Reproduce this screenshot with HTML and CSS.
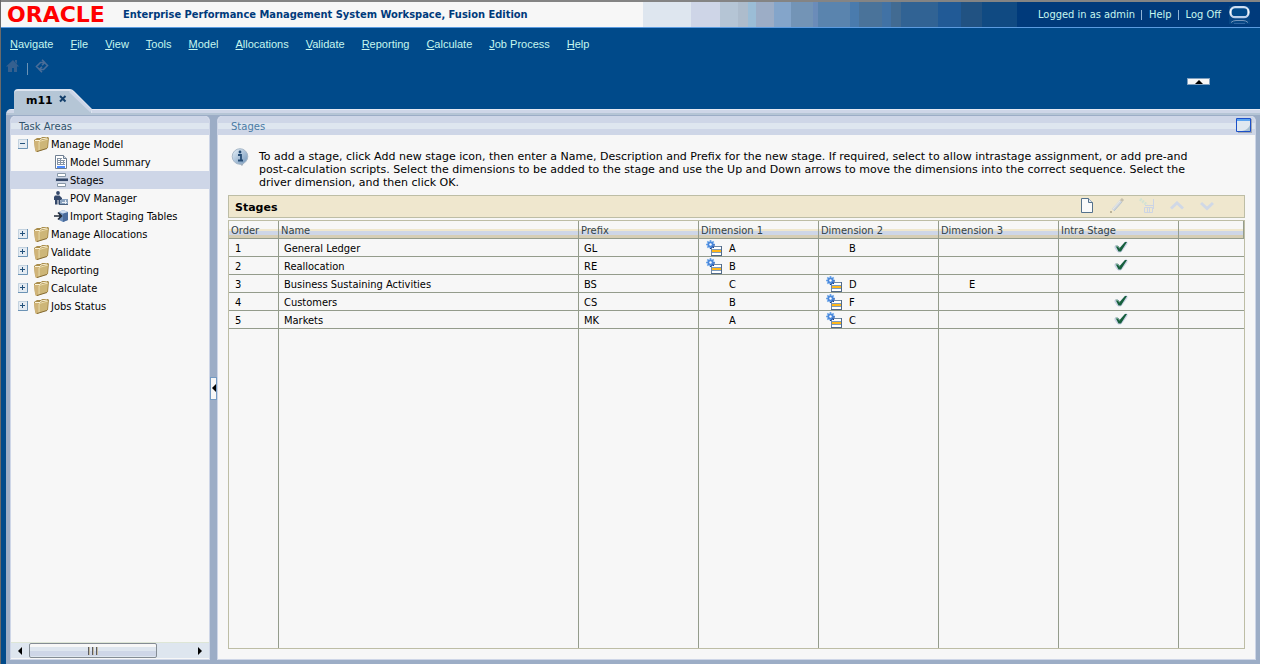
FILE: index.html
```html
<!DOCTYPE html>
<html lang="en">
<head>
<meta charset="utf-8">
<title>Enterprise Performance Management System Workspace, Fusion Edition</title>
<link rel="stylesheet" href="styles.css">
</head>
<body>
<svg class="sprite" aria-hidden="true">
  <defs>
    <linearGradient id="g-blue" x1="0" y1="0" x2="1" y2="1"><stop offset="0" stop-color="#e8f2fa"/><stop offset="1" stop-color="#6f93b8"/></linearGradient>
    <linearGradient id="g-ring" x1="0" y1="0" x2="0" y2="1"><stop offset="0" stop-color="#c9dcf2"/><stop offset=".5" stop-color="#fff"/><stop offset="1" stop-color="#b4cbe8"/></linearGradient>
    <symbol id="folder" viewBox="0 0 15 15">
      <path d="M0 3 3 1h4l1-1h6l1 1-1 10-9 3-3 1-1-3z" fill="#a98d4c"/>
      <path d="M0 4h5l-1 10-2 1-1-3z" fill="#d0b478"/>
      <path d="M5 4.500 14 2l-1 9-9 3.500z" fill="#cdb678"/>
      <path d="M5 4.500 14 2M5 5v9" stroke="#eedfb2" fill="none"/>
      <path d="M1 3.500h5L7 2l6-1" stroke="#fbf3d8" fill="none"/>
      <path d="M3 14.500 13 11.500" stroke="#866c33" fill="none"/>
    </symbol>
    <symbol id="plus" viewBox="0 0 10 10">
      <path d="M0 0h10v10H0z" fill="#e4ebf2"/><path d="M9.500 0v9.500H0" stroke="#6c93b5" fill="none"/><path d="M.5 9V.5H9" stroke="#c3d2df" fill="none"/>
      <path d="M2 4.500h5M4.500 2v5" stroke="#24527c" fill="none"/>
    </symbol>
    <symbol id="minus" viewBox="0 0 10 10">
      <path d="M0 0h10v10H0z" fill="#e4ebf2"/><path d="M9.500 0v9.500H0" stroke="#6c93b5" fill="none"/><path d="M.5 9V.5H9" stroke="#c3d2df" fill="none"/>
      <path d="M2 4.500h5" stroke="#24527c" fill="none"/>
    </symbol>
    <symbol id="sheet" viewBox="0 0 14 14">
      <path d="M1.500.5h8l3 3v10h-11z" fill="#fff" stroke="#6f7f92"/><path d="M9.500.5v3h3" fill="#d5dde6" stroke="#6f7f92"/>
      <path d="M3 3.500h5M3 5.500h8M3 7.500h8M3 9.500h8M3.500 3v7M6.500 3v7M9.500 5v5" stroke="#8795a6" fill="none"/><path d="M3 11h8v2H3z" fill="#4d8bff"/>
    </symbol>
    <symbol id="stages" viewBox="0 0 14 14">
      <path d="M3.500.5h8v3h-8zM3.500 10.500h8v3h-8z" fill="#fff" stroke="#8898a8"/>
      <path d="M1 5h13v4H1z" fill="#c4cedd"/><path d="M2 5.500h12v2.500H2z" fill="#34486a"/>
    </symbol>
    <symbol id="pov" viewBox="0 0 14 14">
      <circle cx="4" cy="2" r="1.900" fill="#34486a"/><path d="M0 6l1-1.500h4.500L8 7v2H6v4.500H4.500V9H3.500v4.500H1V9H0z" fill="#34486a"/>
      <path d="M6 9.500 8 8h6v5H6z" fill="#8ba3bf"/><path d="M8 11.500h5M11.500 9v4" stroke="#e8eef5" fill="none"/><path d="M5 13.500h9" stroke="#49617f"/>
    </symbol>
    <symbol id="import" viewBox="0 0 14 14">
      <path d="M5 3 9 1l5 2v8l-5 2-4-2z" fill="#6d8fbc"/><path d="M9 4.500 14 3v8l-5 2z" fill="#4a6c9d"/><path d="M5 3 9 1l5 2-5 1.500z" fill="#cfdef0"/>
      <path d="M0 7h7M4 3.500 7.500 7 4 10.500" stroke="#222b3a" stroke-width="1.600" fill="none"/>
    </symbol>
    <symbol id="dim" viewBox="0 0 16 16">
      <path d="M5.500 6.500h10v9h-10z" fill="#fff" stroke="#6f88a4"/><path d="M6 9h9v4H6z" fill="#7d9dc0"/><path d="M6 10h9v2H6z" fill="#ffb71a"/><path d="M15.500 6v10M5 15.500h11" stroke="#526a88" fill="none"/>
      <path d="M4.500 0v9M0 4.500h9M1.300 1.300l6.400 6.400M7.700 1.300 1.300 7.700" stroke="#6aa6ea" stroke-width="1.700"/>
      <circle cx="4.500" cy="4.500" r="3.100" fill="#4a88dc"/><path d="M4 8.500h1l3-3v-1M7 8l1-1" stroke="#163f92" fill="none"/><circle cx="4.500" cy="4.500" r="1.200" fill="#fff"/>
    </symbol>
    <symbol id="check" viewBox="0 0 14 12">
      <path d="M1 5h3l2 2 5-6h2v2L7 11H4L1 7z" fill="#cbd3e6" stroke="#cbd3e6"/><path d="M1.500 4.800h2.300l1.900 2.200L11 1h2L7 10.500H4.500z" fill="#17603d"/><path d="M2 5.500h2L5.500 7.500" stroke="#6fa48b" fill="none"/>
    </symbol>
  </defs>
</svg>

<div class="workspace">
  <header class="masthead">
    <span class="logo">ORACLE</span>
    <h1 class="product">Enterprise Performance Management System Workspace, Fusion Edition</h1>
    <div class="stripes"></div>
    <div class="session">
      <span>Logged in as admin</span><a href="#help">Help</a><a href="#logoff">Log Off</a>
      <svg class="ring" viewBox="0 0 21 18"><path d="M0 0h21v18H0z" fill="#064684"/><rect x="1.500" y="1.200" width="18" height="10" rx="4.500" fill="#004a8a" stroke="url(#g-ring)" stroke-width="2.200"/><path d="M2 16.500q2-2 5-2h7q3 0 5 2" stroke="#7294ba" fill="none"/><path d="M5 17.500h11" stroke="#2e64a0"/></svg>
    </div>
  </header>

  <nav class="menu">
    <a href="#navigate"><u>N</u>avigate</a><a href="#file"><u>F</u>ile</a><a href="#view"><u>V</u>iew</a><a href="#tools"><u>T</u>ools</a><a href="#model"><u>M</u>odel</a><a href="#allocations"><u>A</u>llocations</a><a href="#validate"><u>V</u>alidate</a><a href="#reporting"><u>R</u>eporting</a><a href="#calculate"><u>C</u>alculate</a><a href="#job"><u>J</u>ob Process</a><a href="#menuhelp"><u>H</u>elp</a>
  </nav>

  <div class="quickbar">
    <button class="quick" aria-label="Home"><svg width="14" height="14" viewBox="0 0 14 14"><path d="M7 1 13 7.500h-2V13H8V9H6v4H2V7.500H0z" fill="#35608f"/><path d="M9 1h2v4L9 3z" fill="#35608f"/></svg></button>
    <span class="rule"></span>
    <button class="quick" aria-label="Refresh"><svg width="14" height="14" viewBox="0 0 14 14"><path d="M4 10 1.500 7.500 5.500 3.500h4M7 .8 9.700 3.500 7 6.200M10 4l2.500 2.500-4 4h-4M7 7.800 4.300 10.500 7 13.200" stroke="#4a6d98" stroke-width="1.600" fill="none"/></svg></button>
    <button class="collapse" aria-label="Collapse header"><svg width="8" height="4" viewBox="0 0 8 4"><path d="M4 0 8 4H0z"/></svg></button>
  </div>

  <div class="tabs">
    <div class="tab">
      <svg class="tab-shape" viewBox="0 0 78 24"><path d="M0 24V4Q0 0 4 0h52q2 0 4 2l18 18v4z" fill="#dde4ef"/><path d="M0 24V5Q0 2 3 2h52l3 1 19 19v2z" fill="#b5c6d6"/><path d="M56 2l21 20" stroke="#ccd5e7" stroke-width="3"/></svg>
      <span class="tab-name">m11</span>
      <button class="tab-close" aria-label="Close tab"><svg width="8" height="8" viewBox="0 0 8 8"><path d="M1 1 6.500 6.500M6.500 1 1 6.500" stroke="#14406c" stroke-width="2"/></svg></button>
    </div>
  </div>

  <div class="frame">
    <aside class="panel side">
      <h2 class="panel-head side-head">Task Areas</h2>
      <ul class="tree">
        <li><svg class="toggle"><use href="#minus"/></svg><svg class="folder"><use href="#folder"/></svg><a href="#m">Manage Model</a></li>
        <li class="child"><svg><use href="#sheet"/></svg><a href="#ms">Model Summary</a></li>
        <li class="child selected"><svg><use href="#stages"/></svg><a href="#st">Stages</a></li>
        <li class="child"><svg><use href="#pov"/></svg><a href="#pm">POV Manager</a></li>
        <li class="child"><svg><use href="#import"/></svg><a href="#is">Import Staging Tables</a></li>
        <li><svg class="toggle"><use href="#plus"/></svg><svg class="folder"><use href="#folder"/></svg><a href="#ma">Manage Allocations</a></li>
        <li><svg class="toggle"><use href="#plus"/></svg><svg class="folder"><use href="#folder"/></svg><a href="#va">Validate</a></li>
        <li><svg class="toggle"><use href="#plus"/></svg><svg class="folder"><use href="#folder"/></svg><a href="#re">Reporting</a></li>
        <li><svg class="toggle"><use href="#plus"/></svg><svg class="folder"><use href="#folder"/></svg><a href="#ca">Calculate</a></li>
        <li><svg class="toggle"><use href="#plus"/></svg><svg class="folder"><use href="#folder"/></svg><a href="#js">Jobs Status</a></li>
      </ul>
      <div class="scroll">
        <button class="arrow" aria-label="Scroll left"><svg width="4" height="8" viewBox="0 0 4 8"><path d="M4 0v8L0 4z"/></svg></button>
        <div class="track"><div class="thumb"><i></i><i></i><i></i></div></div>
        <button class="arrow" aria-label="Scroll right"><svg width="4" height="8" viewBox="0 0 4 8"><path d="M0 0v8l4-4z"/></svg></button>
      </div>
    </aside>

    <div class="splitter"><button aria-label="Collapse task areas"><svg width="4" height="8" viewBox="0 0 4 8"><path d="M4 0v8L0 4z"/></svg></button></div>

    <main class="panel content">
      <div class="panel-head content-head"><h2>Stages</h2>
        <button class="maximize" aria-label="Maximize"><svg width="16" height="15" viewBox="0 0 16 15"><path d="M1 1h15v14H2z" fill="#a2a8b4"/><path d="M.5.5h14v13H.5z" fill="#dfe8f0" stroke="#1c50c8"/><path d="M1 1h13v2H1z" fill="#5ba4f0"/><path d="M14 7v6H6q6-1 8-6z" fill="#a8c0d2"/></svg></button>
      </div>
      <div class="body">
        <div class="hint">
          <svg width="18" height="18" viewBox="0 0 18 18"><path d="M8 15h5l-2 3z" fill="#93a3b3"/><circle cx="9" cy="8.500" r="7.800" fill="url(#g-blue)" stroke="#a8b8c8"/><path d="M7 7h3v5M7 12.500h5" stroke="#244a72" stroke-width="1.800" fill="none"/><circle cx="9" cy="4" r="1.400" fill="#244a72"/></svg>
          <p>To add a stage, click Add new stage icon, then enter a Name, Description and Prefix for the new stage. If required, select to allow intrastage assignment, or add pre-and<br>post-calculation scripts. Select the dimensions to be added to the stage and use the Up and Down arrows to move the dimensions into the correct sequence. Select the<br>driver dimension, and then click OK.</p>
        </div>
        <div class="toolbar">
          <h3>Stages</h3>
          <button aria-label="Add new stage"><svg width="14" height="15" viewBox="0 0 14 15"><path d="M1.500.5h7l4 4v10h-11z" fill="#fafafa" stroke="#54718c"/><path d="M8.500.5v4h4" fill="#dfe6ec" stroke="#54718c"/></svg></button>
          <button aria-label="Edit" disabled><svg width="16" height="16" viewBox="0 0 16 16"><path d="M4 12 12 3" stroke="#cfd5e0" stroke-width="3"/><path d="M4 11 11 3" stroke="#e8ebe5"/><path d="M12 3l2-2" stroke="#c5bfae" stroke-width="3"/><path d="M1 14h2" stroke="#bdb49a" stroke-width="2"/><path d="M5 13l8-9" stroke="#b9c5cd"/></svg></button>
          <button aria-label="Delete" disabled><svg width="16" height="16" viewBox="0 0 16 16"><path d="M1 1l7 6" stroke="#d3e3d3" stroke-width="3" stroke-dasharray="2 1"/><path d="M5.500 9.500h8v5h-8zM8.500 10v4M10.500 10v4M14.500 1v10M6 7.500h9" stroke="#ccd4e4" fill="none"/></svg></button>
          <button aria-label="Move up" disabled><svg width="14" height="10" viewBox="0 0 14 10"><path d="M1 7.500 7 2l6 5.500" stroke="#d0d8e6" stroke-width="3" fill="none"/></svg></button>
          <button aria-label="Move down" disabled><svg width="14" height="10" viewBox="0 0 14 10"><path d="M1 2l6 5.500L13 2" stroke="#d0d8e6" stroke-width="3" fill="none"/></svg></button>
        </div>
        <div class="grid">
          <table>
            <colgroup><col class="c-order"><col class="c-name"><col class="c-std"><col class="c-std"><col class="c-std"><col class="c-std"><col class="c-std"><col></colgroup>
            <thead><tr><th>Order</th><th>Name</th><th>Prefix</th><th>Dimension 1</th><th>Dimension 2</th><th>Dimension 3</th><th>Intra Stage</th><th></th></tr></thead>
            <tbody>
              <tr><td>1</td><td>General Ledger</td><td>GL</td><td class="dim"><svg><use href="#dim"/></svg>A</td><td class="dim"><svg></svg>B</td><td></td><td class="tick"><svg><use href="#check"/></svg></td><td></td></tr>
              <tr><td>2</td><td>Reallocation</td><td>RE</td><td class="dim"><svg><use href="#dim"/></svg>B</td><td></td><td></td><td class="tick"><svg><use href="#check"/></svg></td><td></td></tr>
              <tr><td>3</td><td>Business Sustaining Activities</td><td>BS</td><td class="dim"><svg></svg>C</td><td class="dim"><svg><use href="#dim"/></svg>D</td><td class="dim"><svg></svg>E</td><td></td><td></td></tr>
              <tr><td>4</td><td>Customers</td><td>CS</td><td class="dim"><svg></svg>B</td><td class="dim"><svg><use href="#dim"/></svg>F</td><td></td><td class="tick"><svg><use href="#check"/></svg></td><td></td></tr>
              <tr><td>5</td><td>Markets</td><td>MK</td><td class="dim"><svg></svg>A</td><td class="dim"><svg><use href="#dim"/></svg>C</td><td></td><td class="tick"><svg><use href="#check"/></svg></td><td></td></tr>
              <tr class="rest"><td></td><td></td><td></td><td></td><td></td><td></td><td></td><td></td></tr>
            </tbody>
          </table>
        </div>
      </div>
    </main>
  </div>
</div>
</body>
</html>
```
FILE: styles.css
```css
* { box-sizing: border-box; }

body {
  margin: 0;
  background: #fff;
  color: #000;
  font: 11px/18px "DejaVu Sans Condensed", "DejaVu Sans", sans-serif;
}

h1, h2, h3, p, ul { margin: 0; padding: 0; font-size: 11px; font-weight: normal; }
a { color: inherit; text-decoration: none; }
button { border: 0; padding: 0; background: none; font: inherit; display: flex; align-items: center; justify-content: center; }
svg { display: block; flex: none; }
.sprite { position: absolute; width: 0; height: 0; }

.workspace {
  display: flex;
  flex-direction: column;
  height: 100vh;
  margin-right: 1px;
  border-left: 1px solid #6a6a6a;
  background: #004a8a;
}

.masthead {
  display: flex;
  align-items: stretch;
  flex: none;
  height: 28px;
  border-top: 2px solid #848484;
  border-bottom: 1px solid #5b9be0;
  background: #f7f7f7;
}
.logo { flex: none; width: 122px; padding-left: 6px; color: #f00; font: bold 22px/25px "DejaVu Sans", sans-serif; }
.product { flex: 1; color: #003a7b; font-weight: bold; line-height: 26px; white-space: nowrap; }
.stripes {
  flex: none;
  width: 374px;
  background: linear-gradient(90deg,
    #dee6ef 0 48px, #ced5e7 0 77px, #b5c5d5 0 95px, #adbccc 0 105px, #9bbdd6 0 113px,
    #9cadc6 0 131px, #84a5ca 0 148px, #7394b6 0 170px, #6b8cb9 0 175px, #5a84ae 0 207px,
    #4a7bad 0 216px, #4a739a 0 239px, #4172a5 0 248px, #426b92 0 258px, #316394 0 295px,
    #215a96 0 318px, #215282 0 339px, #104a82 0);
}
.session {
  display: flex;
  align-items: center;
  justify-content: flex-end;
  flex: none;
  min-width: 243px;
  padding: 1px 10px 0 0;
  background: #003a7b;
  color: #c6f7ef;
}
.session a { margin-left: 6px; padding-left: 7px; border-left: 1px solid #8fb4d8; line-height: 10px; }
.ring { width: 21px; height: 18px; margin-left: 8px; }

.menu {
  display: flex;
  flex: none;
  gap: 17px;
  padding: 6px 9px 5px;
  color: #c6f7ef;
  font: 11px/20px "Liberation Sans", Arial, sans-serif;
}

.quickbar { display: flex; flex: none; height: 30px; padding-left: 5px; }
.quick { width: 14px; height: 14px; }
.rule { width: 1px; height: 12px; margin: 4px 7px 0 7px; background: #6c93b5; }
.collapse { width: 23px; height: 7px; margin: 19px 50px 0 auto; background: #f7f7f7; border: 1px solid #7f9fbe; }

.tabs { display: flex; flex: none; height: 20px; padding-left: 13px; }
.tab { position: relative; display: flex; align-items: flex-start; gap: 6px; width: 78px; height: 24px; padding: 2px 0 0 12px; }
.tab-shape { position: absolute; inset: 0; }
.tab-name { position: relative; font: bold 11px/20px "DejaVu Sans", sans-serif; }
.tab-close { position: relative; height: 16px; }

.frame {
  display: flex;
  flex: 1;
  min-height: 0;
  margin-left: 5px;
  padding: 7px 4px 4px;
  border-radius: 5px 0 0;
  background: linear-gradient(#e4e9f3 0 1px, #ced6e7 0 4px, #b5c5d5 0 6px, #9cadc6 0);
}
.panel {
  display: flex;
  flex-direction: column;
  min-width: 0;
  border: solid #ced6e7;
  border-width: 0 1px 1px;
  border-radius: 5px 5px 0 0;
  background: #f7f7f7;
  overflow: hidden;
}
.side { flex: none; width: 200px; }
.content { flex: 1; }
.panel-head {
  flex: none;
  height: 19px;
  background: linear-gradient(#ced6e7 0 7px, #dee6ef 0 13px, #ced6e7 0);
  color: #31526b;
  font: 10px/21px "DejaVu Sans", sans-serif;
}
.side-head { padding-left: 8px; }
.content-head { display: flex; justify-content: space-between; padding: 0 3px 0 13px; }
.content-head h2 { color: #4a7ba5; font-size: 10px; }
.maximize { margin-top: 2px; height: 15px; }

.tree { flex: 1; list-style: none; }
.tree li { display: flex; align-items: center; height: 18px; padding-left: 7px; white-space: nowrap; }
.tree a { line-height: 16px; padding-top: 2px; }
.tree .child { padding-left: 43px; }
.tree svg { width: 14px; height: 14px; margin-right: 2px; }
.tree .toggle { width: 10px; height: 10px; margin-right: 6px; }
.tree .folder { width: 15px; height: 15px; }
.tree .selected { background: #ced6e7; }

.scroll { display: flex; flex: none; height: 16px; margin-bottom: 1px; border-top: 1px solid #dee6d6; background: #dee6ef; }
.arrow { width: 18px; }
.track { display: flex; flex: 1; }
.thumb {
  display: flex;
  align-items: center;
  justify-content: center;
  gap: 2px;
  width: 79%;
  border: 1px solid #848c94;
  border-radius: 2px;
  background: linear-gradient(#f7f7f7 0 3px, #dee6ef 0 7px, #ced6e7 0 12px, #dee6ef 0);
}
.thumb i { width: 2px; height: 8px; background: #5a5a60; border-right: 1px solid #c6bda5; }

.splitter { display: flex; flex: none; align-items: center; width: 7px; }
.splitter button { width: 7px; height: 23px; background: #f7f7f7; border: 1px solid #739ac2; }

.body { display: flex; flex: 1; flex-direction: column; min-height: 0; padding: 13px 10px 10px; }
.hint { display: flex; flex: none; gap: 10px; height: 47px; padding-left: 3px; }
.hint p { padding-top: 2px; font: 11px/13px "DejaVu Sans", sans-serif; white-space: nowrap; }
.toolbar {
  display: flex;
  align-items: center;
  flex: none;
  height: 23px;
  margin-bottom: 2px;
  padding: 0 22px 0 6px;
  border: 1px solid #bdbda5;
  background: #efe7ce;
}
.toolbar h3 { margin-right: auto; padding-top: 2px; font: bold 11px/20px "DejaVu Sans", sans-serif; }
.toolbar button { width: 30px; height: 22px; padding-bottom: 2px; }

.grid { display: grid; flex: 1; min-height: 0; border: 1px solid #bdbda5; }
table { width: 100%; height: 100%; table-layout: fixed; border-collapse: separate; border-spacing: 0; }
.c-order { width: 50px; }
.c-name { width: 300px; }
.c-std { width: 120px; }
tr { height: 18px; }
th, td { height: 18px; padding: 2px 0 0; border: solid #949c8c; border-width: 0 1px 1px 0; text-align: left; font-weight: normal; line-height: 15px; white-space: nowrap; }
th { padding-left: 2px; color: #31424a; background: linear-gradient(#f7f7f7 0 8px, #efe7ce 0 10px, #ced6e7 0 14px, #d6ceb5 0); }
td { padding-left: 5px; }
td:first-child { padding-left: 6px; }
td:last-child { border-right: 0; }
.dim svg { display: inline-block; width: 16px; height: 16px; margin: -1px 7px 0 2px; vertical-align: top; }
.tick { padding: 0; }
.tick svg { width: 14px; height: 12px; margin: 0 auto; }
.tick { padding: 0 0 1px 5px; }
.rest, .rest td { height: 100%; border-bottom: 0; }
```
